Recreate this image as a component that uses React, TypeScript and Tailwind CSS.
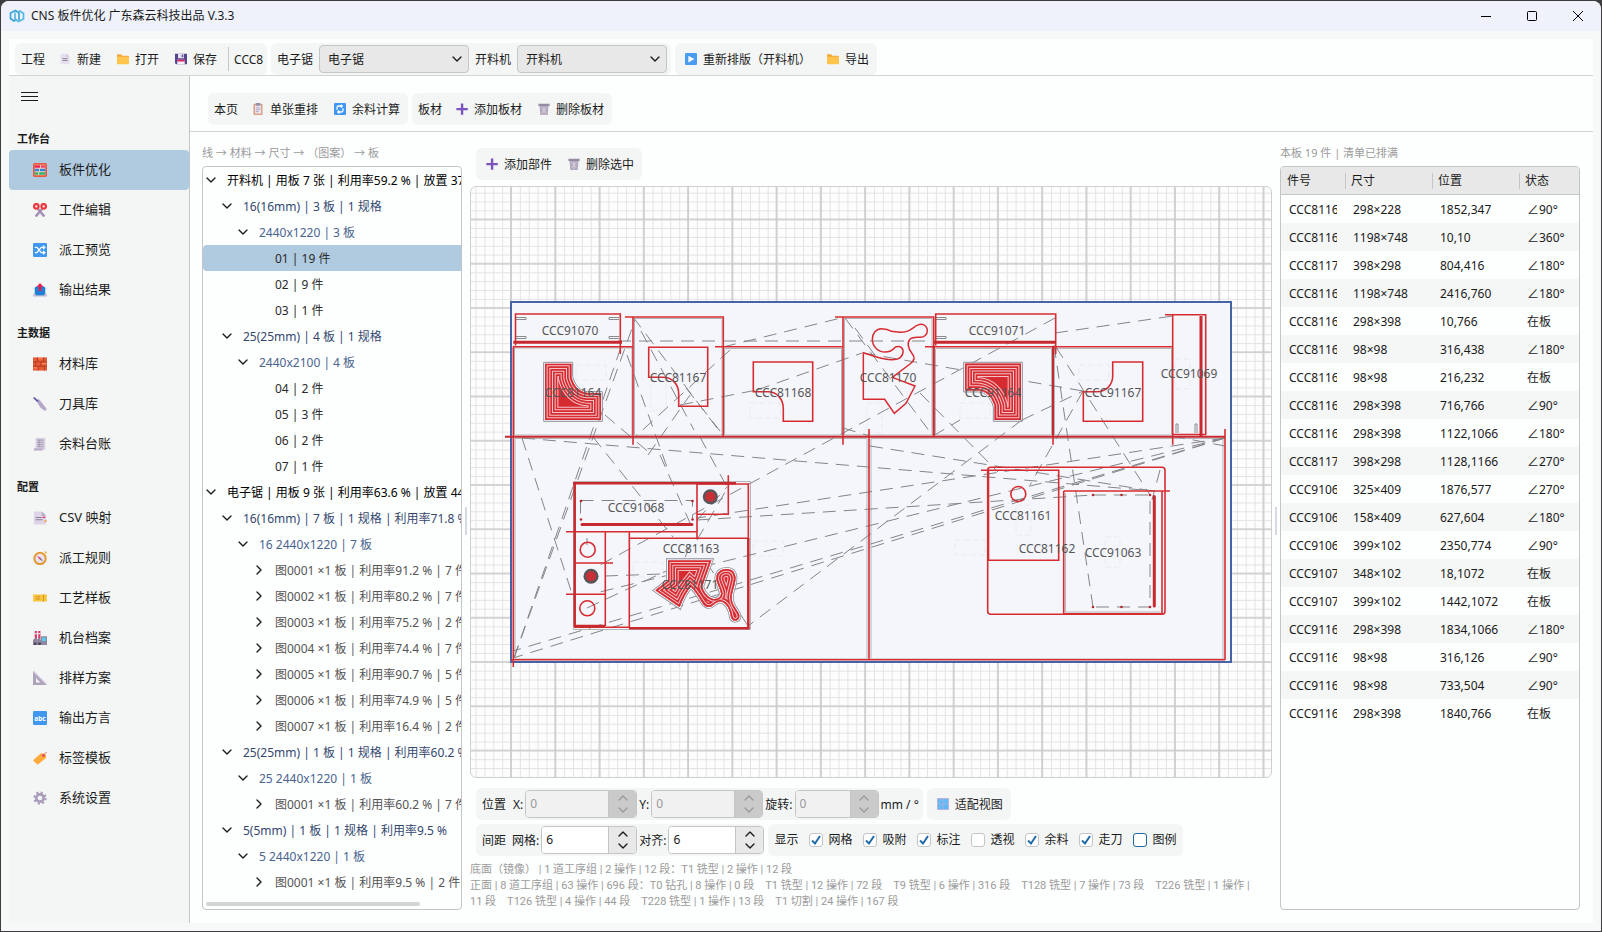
import { useState } from "react";
import type { ReactNode } from "react";
import { ChevronDown, ChevronRight, ChevronUp } from "lucide-react";

type IconName =
  | "doc" | "folder" | "save" | "play" | "clipboard" | "refresh" | "plus" | "trash" | "window"
  | "abacus" | "scissors" | "shuffle" | "outbox" | "brick" | "knife" | "scroll" | "pages"
  | "compass" | "ticket" | "factory" | "ruler" | "abc" | "tag" | "gear";

const icons: Record<IconName, ReactNode> = {
  doc: (
    <>
      <path d="M2 1h8l4 4v10H2z" fill="#e6dfee" />
      <path d="M10 1l4 4h-4z" fill="#c9bdd8" />
      <path d="M4.500 7.500h7M4.500 10h7" stroke="#8d8299" strokeWidth="1.300" />
    </>
  ),
  folder: (
    <>
      <path d="M0 2.500q0-1 1-1h4.500l1.500 2h8q1 0 1 1V14H0z" fill="#f3a73c" />
      <path d="M0 5h16v9q0 1-1 1H1q-1 0-1-1z" fill="#ffc64b" />
    </>
  ),
  save: (
    <>
      <path d="M0 1h16v14H1.500L0 13.500z" fill="#56468f" />
      <path d="M4 1h8v6H4z" fill="#e9e4f3" />
      <path d="M9 2h2v3.500H9z" fill="#56468f" />
      <path d="M3 9h10v6H3z" fill="#f3eef9" />
      <path d="M3 9h10v2.300H3z" fill="#d9245c" />
    </>
  ),
  play: (
    <>
      <rect width="16" height="16" rx="1.500" fill="#4a9cf2" />
      <path d="M4.500 3.500l8 4.500-8 4.500z" fill="#fff" />
    </>
  ),
  clipboard: (
    <>
      <rect x="2" y="1" width="12" height="15" rx="1" fill="#d9a184" />
      <path d="M4 3h8v11H4z" fill="#eee7f3" />
      <path d="M5 0h6v3.500H5z" fill="#9a8fa8" />
      <path d="M5 6.500h6M5 9h6M5 11.500h4" stroke="#a99bbb" strokeWidth="1.200" />
    </>
  ),
  refresh: (
    <>
      <rect width="16" height="16" rx="1.500" fill="#3f97f0" />
      <path d="M4 9V6q0-2 2-2h5M9 2.500L11 4 9 6M12 7v3q0 2-2 2H5M7 10l-2 2 2 2" fill="none" stroke="#fff" strokeWidth="1.700" />
    </>
  ),
  plus: <path d="M6.500.5h3.200v6h6v3.200h-6v6H6.500v-6h-6V6.500h6z" fill="#7a54bd" />,
  trash: (
    <>
      <path d="M2 4h12l-1 12H3z" fill="#b5abc0" />
      <path d="M.5 1h15v3H.5z" fill="#978ba3" />
      <path d="M5 6l6 7M11 6l-6 7M8 5v10" stroke="#dcd6e2" strokeWidth="1" />
    </>
  ),
  window: (
    <>
      <rect width="16" height="16" rx="1" fill="#b7b3dc" />
      <path d="M1.500 1.500h6v6h-6zM8.500 1.500h6v6h-6zM1.500 8.500h6v6h-6zM8.500 8.500h6v6h-6z" fill="#5db6f4" />
      <path d="M3 6l3-3M10 6l3-3M3 13l3-3" stroke="#8dd2fb" strokeWidth="1.200" />
    </>
  ),
  abacus: (
    <>
      <rect width="16" height="16" rx="2" fill="#e9583c" />
      <path d="M2 2h12v12H2z" fill="#ffd2bf" />
      <path d="M2 4h6" stroke="#e52a56" strokeWidth="3" />
      <path d="M9 4h5" stroke="#f3476b" strokeWidth="3" />
      <path d="M2 8h5M8 8h6" stroke="#2c87e0" strokeWidth="3" />
      <path d="M2 12h4M7 12h7" stroke="#31b56b" strokeWidth="3" />
    </>
  ),
  scissors: (
    <>
      <path d="M5 6l8 9.500M11 6L3 15.500" stroke="#a48fb4" strokeWidth="2.800" />
      <circle cx="3.800" cy="3.800" r="2.600" fill="none" stroke="#f0383f" strokeWidth="2.500" />
      <circle cx="12.200" cy="3.800" r="2.600" fill="none" stroke="#f0383f" strokeWidth="2.500" />
    </>
  ),
  shuffle: (
    <>
      <rect width="16" height="16" rx="1.500" fill="#3f97f0" />
      <path d="M2 5h2.500l5 6H13M2 11h2.500l5-6H13M11.500 3L13.500 5l-2 2M11.500 9l2 2-2 2" fill="none" stroke="#fff" strokeWidth="1.600" />
    </>
  ),
  outbox: (
    <>
      <path d="M1 12h14l1 3.500H0z" fill="#c1b6d0" />
      <path d="M2 6q0-2 2-2h8q2 0 2 2v6l-2 2H4l-2-2z" fill="#1f7fd6" />
      <path d="M8 0l4 4.500H9.500V9h-3V4.500H4z" fill="#e0244f" />
    </>
  ),
  brick: (
    <>
      <rect y=".5" width="16" height="15" fill="#e85a35" />
      <path d="M0 5.500h16M0 10.500h16M5 .5v5M12 .5v5M9 5.500v5M3 5.500v5M6 10.500v5M13 10.500v5" stroke="#a83a26" strokeWidth="1" />
      <path d="M6 2h5M10 7.500h5M1 12.500h4" stroke="#ff8a5c" strokeWidth="1.300" />
    </>
  ),
  knife: (
    <>
      <path d="M4 3l3-.5 9 11.500-2 2q-6-3-8-8z" fill="#b3a6c7" />
      <path d="M0 1l1.500-1L6.500 4.500 5 6z" fill="#5d5ba6" />
      <path d="M14 16l2-2-1-2z" fill="#ddd4e6" />
    </>
  ),
  scroll: (
    <>
      <path d="M3 1h11v13.500H3z" fill="#d6cfe0" />
      <path d="M1 13h10v2.500H1z" fill="#b9abc9" />
      <path d="M5 3.500h7M5 6h7M5 8.500h7M5 11h7M7 3v8.500" stroke="#a095b0" strokeWidth="1" />
    </>
  ),
  pages: (
    <>
      <path d="M1 .5h9l5 5V15.500H1z" fill="#ded6e7" />
      <path d="M10 .5l5 5h-5z" fill="#b5a9c4" />
      <path d="M3 7.500h7M3 10h8" stroke="#8d8299" strokeWidth="1.200" />
      <path d="M11 6.500h3v1.500h-3z" fill="#e8315f" />
      <path d="M13 10.500h2.500v2H13z" fill="#f0a23a" />
    </>
  ),
  compass: (
    <>
      <circle cx="8" cy="8.500" r="6.500" fill="#e9e2ee" stroke="#e39a35" strokeWidth="2.300" />
      <path d="M13 0l3 1-1.500 3z" fill="#f0b24c" />
      <path d="M4.500 5.500L9 8l-1.500 1.500z" fill="#df3158" />
      <path d="M11.500 12L9 8 7.500 9.500z" fill="#6b6680" />
    </>
  ),
  ticket: (
    <>
      <path d="M0 4h16v2.800q-1.200 1.200 0 2.400V12H0V9.200q1.200-1.200 0-2.400z" fill="#f8c53f" />
      <path d="M3 6.500h5M3 9h5M12 4v8" stroke="#cf8d22" strokeWidth="1" />
    </>
  ),
  factory: (
    <>
      <path d="M2 0h2.500v10H2zM6 0h2.500v10H6z" fill="#d83c66" />
      <path d="M2 3h2.500M6 3h2.500" stroke="#f3dfe7" strokeWidth="1.300" />
      <path d="M0 10l4-2.500V10l4-2.500V10h1V6h7v10H0z" fill="#8f87a0" />
      <path d="M10.500 7.500h4v4h-4z" fill="#52d3f0" />
      <path d="M1 13h3v3H1zM6 13h3v3H6z" fill="#4c4558" />
    </>
  ),
  ruler: (
    <>
      <path d="M0 0l16 16H0z" fill="#aca3ba" />
      <path d="M3.500 8l5 5h-5z" fill="#f4f6f6" />
      <path d="M0 0l16 16" stroke="#cfc4dc" strokeWidth="1.500" />
    </>
  ),
  abc: (
    <>
      <rect width="16" height="16" rx="1.500" fill="#3f97f0" />
      <text x="8" y="11" textAnchor="middle" fontSize="7.500" fontWeight="700" fill="#fff">abc</text>
    </>
  ),
  tag: (
    <>
      <path d="M9 2.500l5.500.5.500 5-9 7q-1 .7-2-.3l-3-3q-1-1 0-2z" fill="#fbab3a" />
      <circle cx="12" cy="5" r="1.500" fill="#d9306b" />
      <path d="M12 5q3-6 4-2" fill="none" stroke="#e88a92" strokeWidth="1" />
    </>
  ),
  gear: (
    <>
      <circle cx="8" cy="8" r="6.300" fill="none" stroke="#a99cba" strokeWidth="2.600" strokeDasharray="2.400 2.540" />
      <circle cx="8" cy="8" r="4.200" fill="none" stroke="#a99cba" strokeWidth="3" />
    </>
  ),
};

function Icon({ name, className = "w-3 h-3" }: { name: IconName; className?: string }) {
  return (
    <svg viewBox="0 0 16 16" className={`shrink-0 ${className}`} aria-hidden="true">
      {icons[name]}
    </svg>
  );
}

function Group({ children, className = "" }: { children: ReactNode; className?: string }) {
  return <div className={`flex items-center h-8 shrink-0 rounded-md bg-[#f4f6f6] ${className}`}>{children}</div>;
}

function GroupLabel({ children }: { children: ReactNode }) {
  return <span className="px-[6px] pt-[2px]">{children}</span>;
}

function ToolButton({ icon, label }: { icon: IconName; label: string }) {
  return (
    <button className="flex items-center gap-[6px] h-8 px-2 rounded-md hover:bg-gray-200">
      <Icon name={icon} />
      <span className="pt-[2px]">{label}</span>
    </button>
  );
}

function MachineSelect({ label }: { label: string }) {
  return (
    <label className="flex items-center">
      <GroupLabel>{label}</GroupLabel>
      <span className="relative flex items-center">
        <select className="appearance-none w-[150px] h-7 pl-2 pt-px rounded border border-[#c3c5c7] bg-[#e8e8e8]">
          <option>{label}</option>
        </select>
        <ChevronDown size={16} strokeWidth={2} className="absolute right-1 pointer-events-none" />
      </span>
    </label>
  );
}

interface SpinProps {
  label: string;
  initial: number;
  width: string;
  disabled?: boolean;
}

function Spin({ label, initial, width, disabled = false }: SpinProps) {
  const [value, setValue] = useState(initial);
  const tone = disabled
    ? "bg-[#cacaca] text-[#9a9a9a]"
    : "bg-[#e8e8e8] text-[#1b1b1b]";

  return (
    <div className="flex items-center gap-[2px]">
      <label htmlFor={`spin-${label}`} className="pt-[2px]">{label}:</label>
      <div className={`flex h-7 rounded border border-[#c3c5c7] overflow-hidden ${width}`}>
        <input
          id={`spin-${label}`}
          value={value}
          disabled={disabled}
          onChange={(e) => setValue(Number(e.target.value) || 0)}
          className="flex-1 min-w-0 pl-1 bg-white disabled:bg-[#f1f1f1] disabled:text-[#9a9a9a] outline-none"
        />
        <div className={`flex flex-col w-7 items-center justify-center border-l border-[#c3c5c7] ${tone}`}>
          <button disabled={disabled} aria-label={`${label} +`} onClick={() => setValue(value + 1)} className="h-3 flex items-center">
            <ChevronUp size={16} strokeWidth={2} />
          </button>
          <button disabled={disabled} aria-label={`${label} -`} onClick={() => setValue(value - 1)} className="h-3 flex items-center">
            <ChevronDown size={16} strokeWidth={2} />
          </button>
        </div>
      </div>
    </div>
  );
}

function Check({ label, on, focused = false }: { label: string; on: boolean; focused?: boolean }) {
  return (
    <label className="flex items-center gap-[6px] pl-[10px]">
      <span className="relative flex">
        <input
          type="checkbox"
          defaultChecked={on}
          className={`peer appearance-none w-[14px] h-[14px] rounded-[3px] border bg-white ${focused ? "border-[#1f6aa8]" : "border-[#c3c5c7]"}`}
        />
        <svg viewBox="0 0 14 14" className="absolute inset-0 w-[14px] h-[14px] pointer-events-none opacity-0 peer-checked:opacity-100">
          <path d="M3 7.500L6 10.500 11 3" fill="none" stroke="#1f6aa8" strokeWidth="2" />
        </svg>
      </span>
      {label}
    </label>
  );
}

const navSections: { title: string; items: { icon: IconName; label: string; active?: boolean }[] }[] = [
  {
    title: "工作台",
    items: [
      { icon: "abacus", label: "板件优化", active: true },
      { icon: "scissors", label: "工件编辑" },
      { icon: "shuffle", label: "派工预览" },
      { icon: "outbox", label: "输出结果" },
    ],
  },
  {
    title: "主数据",
    items: [
      { icon: "brick", label: "材料库" },
      { icon: "knife", label: "刀具库" },
      { icon: "scroll", label: "余料台账" },
    ],
  },
  {
    title: "配置",
    items: [
      { icon: "pages", label: "CSV 映射" },
      { icon: "compass", label: "派工规则" },
      { icon: "ticket", label: "工艺样板" },
      { icon: "factory", label: "机台档案" },
      { icon: "ruler", label: "排样方案" },
      { icon: "abc", label: "输出方言" },
      { icon: "tag", label: "标签模板" },
      { icon: "gear", label: "系统设置" },
    ],
  },
];

function Sidebar() {
  return (
    <nav className="w-[181px] shrink-0 bg-[#f4f6f6] border-r border-[#c3c5c7] overflow-hidden">
      <button aria-label="菜单" className="flex items-center h-10 px-3">
        <svg viewBox="0 0 17 10" className="w-[17px] h-[10px]" stroke="#1b1b1b" strokeWidth="1">
          <path d="M0 1.500h17M0 5.500h17M0 9.500h17" />
        </svg>
      </button>
      {navSections.map((section) => (
        <div key={section.title}>
          <h2 className="h-[34px] pt-[15px] pl-2 text-[11px] leading-4 font-bold">{section.title}</h2>
          {section.items.map((item) => (
            <button
              key={item.label}
              className={`flex items-center gap-3 w-full h-10 pl-6 rounded text-[13px] ${item.active ? "bg-[#b0cadf]" : "hover:bg-gray-200"}`}
            >
              <Icon name={item.icon} className="w-[14px] h-[14px]" />
              <span>{item.label}</span>
            </button>
          ))}
        </div>
      ))}
    </nav>
  );
}

interface TreeRow {
  level: 0 | 1 | 2 | 3;
  text: string;
  mark?: "open" | "closed";
  selected?: boolean;
}

const treeRows: TreeRow[] = [
  { level: 0, text: "开料机 | 用板 7 张 | 利用率59.2 % | 放置 37", mark: "open" },
  { level: 1, text: "16(16mm) | 3 板 | 1 规格", mark: "open" },
  { level: 2, text: "2440x1220 | 3 板", mark: "open" },
  { level: 3, text: "01 | 19 件", selected: true },
  { level: 3, text: "02 | 9 件" },
  { level: 3, text: "03 | 1 件" },
  { level: 1, text: "25(25mm) | 4 板 | 1 规格", mark: "open" },
  { level: 2, text: "2440x2100 | 4 板", mark: "open" },
  { level: 3, text: "04 | 2 件" },
  { level: 3, text: "05 | 3 件" },
  { level: 3, text: "06 | 2 件" },
  { level: 3, text: "07 | 1 件" },
  { level: 0, text: "电子锯 | 用板 9 张 | 利用率63.6 % | 放置 44", mark: "open" },
  { level: 1, text: "16(16mm) | 7 板 | 1 规格 | 利用率71.8 %", mark: "open" },
  { level: 2, text: "16 2440x1220 | 7 板", mark: "open" },
  { level: 3, text: "图0001 ×1 板 | 利用率91.2 % | 7 件", mark: "closed" },
  { level: 3, text: "图0002 ×1 板 | 利用率80.2 % | 7 件", mark: "closed" },
  { level: 3, text: "图0003 ×1 板 | 利用率75.2 % | 2 件", mark: "closed" },
  { level: 3, text: "图0004 ×1 板 | 利用率74.4 % | 7 件", mark: "closed" },
  { level: 3, text: "图0005 ×1 板 | 利用率90.7 % | 5 件", mark: "closed" },
  { level: 3, text: "图0006 ×1 板 | 利用率74.9 % | 5 件", mark: "closed" },
  { level: 3, text: "图0007 ×1 板 | 利用率16.4 % | 2 件", mark: "closed" },
  { level: 1, text: "25(25mm) | 1 板 | 1 规格 | 利用率60.2 %", mark: "open" },
  { level: 2, text: "25 2440x1220 | 1 板", mark: "open" },
  { level: 3, text: "图0001 ×1 板 | 利用率60.2 % | 7 件", mark: "closed" },
  { level: 1, text: "5(5mm) | 1 板 | 1 规格 | 利用率9.5 %", mark: "open" },
  { level: 2, text: "5 2440x1220 | 1 板", mark: "open" },
  { level: 3, text: "图0001 ×1 板 | 利用率9.5 % | 2 件", mark: "closed" },
];

const treeIndent = ["pl-0", "pl-4", "pl-8", "pl-12"];
const treeColor = ["text-black", "text-[#34486f]", "text-[#4a648f]", "text-[#2b2b2b]"];

function BoardTree() {
  return (
    <section className="flex flex-col w-[260px] shrink-0">
      <p className="h-[34px] pt-[13px] text-[11px] leading-4 text-[#9b9b9b]">线 → 材料 → 尺寸 → （图案） → 板</p>
      <div className="flex flex-col flex-1 min-h-0 rounded border border-[#c3c5c7] overflow-hidden">
        <ul className="flex-1 min-h-0 overflow-hidden">
          {treeRows.map((row, i) => (
            <li
              key={i}
              className={`flex items-center gap-2 h-[26px] whitespace-nowrap ${treeIndent[row.level]} ${
                row.level === 3 && row.mark ? "text-[#555555]" : treeColor[row.level]
              } ${row.selected ? "bg-[#b0cadf] rounded-l" : ""}`}
            >
              <span className="w-4 shrink-0 text-[#1b1b1b]">
                {row.mark === "open" && <ChevronDown size={16} strokeWidth={2} />}
                {row.mark === "closed" && <ChevronRight size={16} strokeWidth={2} />}
              </span>
              <span className="pt-[2px]">{row.text}</span>
            </li>
          ))}
        </ul>
        <div className="w-[214px] h-1 mb-[3px] ml-[3px] rounded-full bg-[#d3d5d5]" />
      </div>
    </section>
  );
}

// Concentric pocket passes: shrinking strokes clipped to the outline.
function Pocket({ id, d, passes }: { id: string; d: string; passes: number }) {
  const steps = Array.from({ length: passes }, (_, i) => passes - 1 - i);
  return (
    <g>
      <clipPath id={id}>
        <path d={d} />
      </clipPath>
      <g clipPath={`url(#${id})`} fill="none">
        <path d={d} fill="#d62c31" />
        {steps.map((k) => (
          <g key={k}>
            <path d={d} stroke="#f3c3c8" strokeWidth={2 * (8 * k + 8)} />
            <path d={d} stroke="#d62c31" strokeWidth={2 * (8 * k + 5)} />
          </g>
        ))}
      </g>
    </g>
  );
}

const partLabels: [string, number, number][] = [
  ["CCC91070", 570, 335], ["CCC81164", 573, 397], ["CCC81167", 678, 382], ["CCC81168", 783, 397],
  ["CCC81170", 888, 382], ["CCC91071", 997, 335], ["CCC91164", 993, 397], ["CCC91167", 1113, 397],
  ["CCC91069", 1189, 378], ["CCC91068", 636, 512], ["CCC81163", 691, 553], ["CCC81171", 690, 589],
  ["CCC81161", 1023, 520], ["CCC81162", 1047, 553], ["CCC91063", 1113, 557],
];

// Rapid moves between cuts: x1, y1, x2, y2
const travelMoves = [
  [618, 341, 935, 341], [633, 317, 723, 436], [641, 331, 694, 430], [627, 355, 668, 470],
  [514, 658, 620, 350], [514, 658, 635, 320], [522, 438, 574, 600], [522, 438, 1155, 491],
  [723, 347, 845, 317], [1055, 333, 1173, 316], [680, 405, 757, 390], [757, 390, 862, 353],
  [863, 353, 1083, 391], [845, 318, 933, 436], [855, 328, 880, 362], [1055, 318, 600, 565],
  [1022, 420, 748, 626], [1022, 420, 1083, 391], [920, 393, 998, 472], [1054, 345, 1093, 607],
  [1056, 347, 1150, 495], [1083, 391, 1030, 485], [1225, 438, 513, 658], [1225, 438, 513, 651],
  [1225, 438, 697, 518], [697, 520, 1093, 495], [1225, 438, 600, 592], [870, 446, 1153, 491],
  [1172, 436, 1225, 446], [700, 437, 727, 487], [593, 437, 673, 537], [660, 455, 690, 523],
  [697, 520, 727, 487], [697, 540, 728, 487], [605, 415, 652, 455], [648, 455, 690, 395],
  [730, 350, 635, 437], [587, 538, 587, 545], [686, 388, 724, 436], [1160, 470, 1152, 500],
  [748, 626, 705, 560], [690, 545, 684, 560], [605, 576, 690, 573],
  [843, 428, 870, 436], [933, 436, 960, 420], [587, 608, 690, 560],
];

const ghostBoxes = [
  [576, 365, 30, 15], [651, 381, 15, 30], [750, 403, 30, 15], [867, 403, 15, 30], [960, 403, 30, 15],
  [1079, 365, 30, 15], [1175, 359, 15, 30], [633, 562, 30, 15], [753, 541, 30, 15], [955, 540, 30, 15],
  [1105, 537, 15, 30], [1016, 505, 15, 30],
];

const lShape = "M135 221H214V262C222 292 240 307 262 309H303V390H135Z";
const blob =
  "M504 391H634L606 470C616 500 640 515 657 503C674 492 650 465 649 445C650 425 664 417 680 417C698 417 708 430 706 450C702 480 686 500 702 528C712 545 719 550 718 560C716 574 697 577 693 561C690 540 682 518 660 514C645 516 640 531 625 531C606 530 600 495 572 470C560 485 548 505 539 531L466 481L504 452Z";

function NestingCanvas() {
  return (
    <div className="flex-1 min-h-0 rounded-md border border-[#cfd1d1] overflow-hidden bg-[#fdfdfd]">
      <svg width="100%" height="100%" role="img" aria-label="排版图">
        <defs>
          <pattern id="minor" width="8.852" height="8.852" x="511" y="661.800" patternUnits="userSpaceOnUse">
            <path d="M.5 0V8.852M0 .5H8.852" stroke="#e2e3e3" strokeWidth="1" />
          </pattern>
          <pattern id="major" width="44.260" height="44.260" x="510" y="661" patternUnits="userSpaceOnUse">
            <path d="M1 0V44.260M0 1H44.260" stroke="#c9caca" strokeWidth="1.600" />
          </pattern>
        </defs>
        <g transform="translate(-471 -187)">
          <rect x="471" y="187" width="3000" height="3000" fill="url(#minor)" />
          <rect x="471" y="187" width="3000" height="3000" fill="url(#major)" />
          <rect x="511" y="302" width="720" height="360" fill="#f5f6fb" stroke="#4563a5" strokeWidth="2" />

          <g fill="none" stroke="#e9eaee" strokeDasharray="6 3">
            {ghostBoxes.map(([x, y, w, h]) => (
              <rect key={`${x}-${y}`} x={x} y={y} width={w} height={h} />
            ))}
          </g>

          <g fill="none" stroke="#b4b4b9">
            <path d="M514.500 348H632V435H514.500zM634.500 318.500H722V435H634.500zM724.500 348.500H841.500V435H724.500zM844.500 318.500H932V435H844.500zM935.500 348.500H1051.500V435H935.500zM1054.500 348.500H1171.500V435H1054.500z" />
            <path d="M573.500 481.500h177v148h-177zM515 438.500H867V659H515zM871 438.500H1223V659H871z" />
            <path d="M516 317.500h10v2h-10M516 336.500h10v2h-10M619 317.500h-10v2h10M619 336.500h-10v2h10M936 317.500h10v2h-10M936 336.500h10v2h-10M1176 433v-9h2v9M1195 433v-9h2v9" stroke="#8a8a8f" />
            <path d="M1065.500 493V612H1160.500" />
          </g>

          <g stroke="#858588" strokeDasharray="13 8" fill="none">
            {travelMoves.map(([x1, y1, x2, y2], i) => (
              <path key={i} d={`M${x1} ${y1}L${x2} ${y2}`} />
            ))}
            <path d="M580.500 500.500H692.500V520M580.500 500.500V520" />
            <path d="M1093 495H1150V607H1093" />
          </g>

          {/* pockets */}
          <g transform="translate(500 290) scale(.33333)">
            <path d="M131 217H218V260C226 288 242 303 262 305H307V394H131Z" fill="none" stroke="#8f8f98" strokeWidth="3" />
            <Pocket id="pocket-a" d={lShape} passes={5} />
          </g>
          <g transform="rotate(180 783 391.800) translate(500 290) scale(.33333)">
            <path d="M131 217H218V260C226 288 242 303 262 305H307V394H131Z" fill="none" stroke="#8f8f98" strokeWidth="3" />
            <Pocket id="pocket-b" d={lShape} passes={5} />
          </g>
          <g transform="translate(500 430) scale(.33333)">
            <path d={blob} fill="none" stroke="#8f8f98" strokeWidth="12" />
            <path d={blob} fill="none" stroke="#f5f6fb" strokeWidth="7" />
            <Pocket id="pocket-c" d={blob} passes={4} />
          </g>

          {/* cut lines */}
          <g fill="none" stroke="#d62c31" strokeWidth="1.600">
            <path d="M515.500 345.500V314H620.300V354M513 346.700H633M513.300 346.700V667" />
            <path d="M625 317H723.300V436.500M633 317V444.700M715 346.700H843" />
            <path d="M835 317H933.700V436.500M843 317V444.700M925 346.700H1173" />
            <path d="M935.700 345.500V314H1055.700V354M1053 346.700V444.700" />
            <path d="M1165 314.700H1205.700V434.500H1172.700M1172.700 314.700V444.700" />
            <path d="M869 429V660M1225 429V660M511 659.700H1225" />
            <path d="M697 484V538.700M697 484H748.300V540M697 514.300H728.300V475.300M566 531.700H697M629.300 531V628" />
            <path d="M605.300 531V626M574 563H613M566 594.300H605.300M574 627.300H630M629.300 538.300H748.500" />
            <rect x="987.700" y="467.300" width="177.300" height="147" rx="3" />
            <path d="M981 470.300H1058.700V560.300H988.500V470.300M1063.700 491V613.700H1162V491M1063.700 491H1170" />
            <circle cx="587.700" cy="549.700" r="7.500" />
            <circle cx="587.300" cy="608.300" r="7.500" />
            <circle cx="1018.300" cy="494" r="7.500" />
            <path d="M648.700 347.300H707.700V406.300H678.700V394C678.700 384 672 377.300 663 377.300H648.700Z" />
            <path d="M753.300 362H812.700V421.300H783.300V409C783.300 399 777 391.700 768 391.700H753.300Z" />
            <path d="M1112.700 362H1142.700V421.300H1083.300V391.700H1097C1106 391.700 1112.700 385 1112.700 376Z" />
          </g>
          <g fill="none" stroke="#c8292f">
            <path d="M505 436.700H1225M933.700 346V436M1053 346V436" strokeWidth="2" />
            <path d="M513.300 342.300H622M934 342.300H1056M1201 316V436" strokeWidth="3" />
            <path d="M573 483.300H736M629 628.300H749.500" strokeWidth="2.500" />
            <path d="M574.700 483V626.500M748.300 538V629M574 626H605" strokeWidth="2.500" />
            <path d="M582 524.500H692M1154.300 496.500V606" strokeWidth="3" strokeLinecap="round" />
          </g>
          <path
            d="M130 188V328H194L223 370L258 340L285 288L217 262L270 222C285 210 285 202 277 192C262 175 262 155 270 148C277 140 290 142 302 142C312 142 322 134 322 122C322 110 313 103 303 103C290 103 280 115 268 121C250 130 235 127 215 124C205 118 195 116 185 116C168 116 157 130 157 148C157 170 175 186 195 186C212 186 220 178 224 173C230 168 240 168 245 173C254 183 248 202 232 207C210 213 190 208 130 188Z"
            transform="translate(820 290) scale(.33333)"
            fill="none"
            stroke="#d62c31"
            strokeWidth="4.500"
          />

          {/* drill holes */}
          {[[591, 576.3], [710.3, 496.7]].map(([cx, cy]) => (
            <g key={cx}>
              <circle cx={cx} cy={cy} r="7.500" fill="#55555a" />
              <circle cx={cx} cy={cy} r="5" fill="#d62c31" />
              <circle cx={cx} cy={cy} r="3" fill="none" stroke="#7d4a50" strokeWidth=".6" />
            </g>
          ))}
          <g fill="#b5282d">
            {[[581, 501], [692.5, 501], [581, 519.5], [692.5, 519.5], [1093, 495], [1121.5, 495], [1150, 495], [1093, 607], [1121.5, 607], [1150, 607]].map(([cx, cy]) => (
              <circle key={`${cx}-${cy}`} cx={cx} cy={cy} r="1.300" />
            ))}
          </g>

          <g fill="#555557" fontSize="12" textAnchor="middle">
            {partLabels.map(([name, x, y]) => (
              <text key={name} x={x} y={y}>{name}</text>
            ))}
          </g>
        </g>
      </svg>
    </div>
  );
}

function Splitter() {
  return (
    <div className="flex items-center justify-center w-2 shrink-0">
      <div className="w-[2px] h-7 bg-[#d5d9e1]" />
    </div>
  );
}

const parts = [
  ["CCC8116", "298×228", "1852,347", "∠90°"],
  ["CCC8116", "1198×748", "10,10", "∠360°"],
  ["CCC8117", "398×298", "804,416", "∠180°"],
  ["CCC8116", "1198×748", "2416,760", "∠180°"],
  ["CCC8116", "298×398", "10,766", "在板"],
  ["CCC8116", "98×98", "316,438", "∠180°"],
  ["CCC8116", "98×98", "216,232", "在板"],
  ["CCC8116", "298×398", "716,766", "∠90°"],
  ["CCC8116", "298×398", "1122,1066", "∠180°"],
  ["CCC8117", "398×298", "1128,1166", "∠270°"],
  ["CCC9106", "325×409", "1876,577", "∠270°"],
  ["CCC9106", "158×409", "627,604", "∠180°"],
  ["CCC9106", "399×102", "2350,774", "∠90°"],
  ["CCC9107", "348×102", "18,1072", "在板"],
  ["CCC9107", "399×102", "1442,1072", "在板"],
  ["CCC9116", "298×398", "1834,1066", "∠180°"],
  ["CCC9116", "98×98", "316,126", "∠90°"],
  ["CCC9116", "98×98", "733,504", "∠90°"],
  ["CCC9116", "298×398", "1840,766", "在板"],
];

function PartList() {
  return (
    <section className="flex flex-col w-[300px] shrink-0">
      <p className="h-[34px] pt-[13px] text-[11px] leading-4 text-[#9b9b9b]">本板 19 件 | 清单已排满</p>
      <div className="flex-1 min-h-0 rounded border border-[#c3c5c7] overflow-hidden">
        <table className="w-full table-fixed border-separate border-spacing-0 text-left">
          <colgroup>
            <col className="w-16" />
            <col className="w-[87px]" />
            <col className="w-[87px]" />
            <col />
          </colgroup>
          <thead>
            <tr className="h-7 bg-[#e8e8e8]">
              {["件号", "尺寸", "位置", "状态"].map((name, i) => (
                <th key={name} className="p-0 font-normal border-b border-[#c3c5c7]">
                  <span className={`block leading-4 border-l pl-[5px] ${i === 0 ? "border-transparent" : "border-[#c3c5c7]"}`}>
                    {name}
                  </span>
                </th>
              ))}
            </tr>
          </thead>
          <tbody>
            {parts.map((row, i) => (
              <tr key={i} className="h-7 even:bg-[#f5f6f6]">
                {row.map((cell, j) => (
                  <td key={j} className="px-2 py-0">
                    <div className="pt-[2px] overflow-hidden whitespace-nowrap">{cell}</div>
                  </td>
                ))}
              </tr>
            ))}
          </tbody>
        </table>
      </div>
    </section>
  );
}

function TitleBar() {
  return (
    <header className="flex items-center h-[30px] shrink-0 bg-[#eff2fb]">
      <svg viewBox="0 0 16 14" className="w-4 h-[14px] ml-2 mr-[6px]" fill="none" stroke="#3ba3d8" strokeWidth="1.700">
        <path d="M10 11V4L6.500 1.500 1.500 4v5.500L5 12l2.500-1.500" />
        <path d="M6 3.500V10l3.500 2.500 5-2.500V4.500L11 2 8.500 3.500" stroke="#58b6e6" />
      </svg>
      <h1 className="flex-1">CNS 板件优化 广东森云科技出品 V.3.3</h1>
      <button aria-label="最小化" className="flex items-center justify-center w-[46px] h-full">
        <svg viewBox="0 0 10 10" className="w-[10px] h-[10px]" stroke="#000"><path d="M0 5.500h10" /></svg>
      </button>
      <button aria-label="最大化" className="flex items-center justify-center w-[46px] h-full">
        <svg viewBox="0 0 10 10" className="w-[10px] h-[10px]" fill="none" stroke="#000"><rect x=".5" y=".5" width="9" height="9" rx="1" /></svg>
      </button>
      <button aria-label="关闭" className="flex items-center justify-center w-[46px] h-full">
        <svg viewBox="0 0 10 10" className="w-[10px] h-[10px]" stroke="#000"><path d="M0 0l10 10M10 0L0 10" /></svg>
      </button>
    </header>
  );
}

export default function App() {
  return (
    <div className="h-screen p-px bg-[#3d3d40] font-['Noto_Sans','Noto_Sans_CJK_SC',sans-serif] text-xs text-[#1b1b1b]">
      <div className="flex flex-col h-full rounded-t-lg overflow-hidden bg-[#f7f9f9]">
        <TitleBar />
        <div className="flex flex-col flex-1 min-h-0 m-2 bg-[#fdfefe]">
          <div className="flex items-center gap-1 h-[37px] shrink-0 pl-[6px] pt-1 border-b border-[#d2d4d5]">
            <Group>
              <GroupLabel>工程</GroupLabel>
              <ToolButton icon="doc" label="新建" />
              <ToolButton icon="folder" label="打开" />
              <ToolButton icon="save" label="保存" />
              <span className="w-px h-6 ml-[3px] mr-[5px] bg-[#c3c5c7]" />
              <span className="w-[33px] pt-[2px]">CCC8</span>
            </Group>
            <Group className="pr-1">
              <MachineSelect label="电子锯" />
              <MachineSelect label="开料机" />
            </Group>
            <Group className="pl-[2px]">
              <ToolButton icon="play" label="重新排版（开料机）" />
              <ToolButton icon="folder" label="导出" />
            </Group>
          </div>

          <div className="flex flex-1 min-h-0">
            <Sidebar />
            <main className="flex flex-col flex-1 min-w-0">
              <div className="flex gap-1 h-14 shrink-0 pl-[18px] pt-[17px] border-b border-[#d2d4d5]">
                <Group>
                  <GroupLabel>本页</GroupLabel>
                  <ToolButton icon="clipboard" label="单张重排" />
                  <ToolButton icon="refresh" label="余料计算" />
                </Group>
                <Group>
                  <GroupLabel>板材</GroupLabel>
                  <ToolButton icon="plus" label="添加板材" />
                  <ToolButton icon="trash" label="删除板材" />
                </Group>
              </div>

              <div className="flex flex-1 min-h-0 pl-3 pr-[13px] pb-[13px]">
                <BoardTree />
                <Splitter />
                <section className="flex flex-col flex-1 min-w-0 pt-4">
                  <div className="flex pl-[6px] mb-[6px]">
                    <Group className="pl-[2px]">
                      <ToolButton icon="plus" label="添加部件" />
                      <ToolButton icon="trash" label="删除选中" />
                    </Group>
                  </div>
                  <NestingCanvas />
                  <div className="flex gap-1 mt-[10px] pl-[6px]">
                    <Group className="gap-[2px] pr-1">
                      <span className="pl-[6px] pr-[5px] pt-[2px]">位置</span>
                      <Spin label="X" initial={0} width="w-[112px]" disabled />
                      <Spin label="Y" initial={0} width="w-[112px]" disabled />
                      <Spin label="旋转" initial={0} width="w-[84px]" disabled />
                      <span className="pt-[2px]">mm / °</span>
                    </Group>
                    <Group className="pl-[2px]">
                      <ToolButton icon="window" label="适配视图" />
                    </Group>
                  </div>
                  <div className="flex gap-1 mt-1 pl-[6px]">
                    <Group className="gap-[2px]">
                      <span className="pl-[6px] pr-1 pt-[2px]">间距</span>
                      <Spin label="网格" initial={6} width="w-24" />
                      <Spin label="对齐" initial={6} width="w-24" />
                    </Group>
                    <Group className="pr-[6px]">
                      <span className="pl-[6px]">显示</span>
                      <Check label="网格" on />
                      <Check label="吸附" on />
                      <Check label="标注" on />
                      <Check label="透视" on={false} />
                      <Check label="余料" on />
                      <Check label="走刀" on />
                      <Check label="图例" on={false} focused />
                    </Group>
                  </div>
                  <div className="mt-[6px] font-['Roboto','Noto_Sans_CJK_SC',sans-serif] text-[11px] leading-4 text-[#9b9b9b]">
                    <p>底面（镜像） | 1 道工序组 | 2 操作 | 12 段：T1 铣型 | 2 操作 | 12 段</p>
                    <p>
                      正面 | 8 道工序组 | 63 操作 | 696 段：T0 钻孔 | 8 操作 | 0 段　T1 铣型 | 12 操作 | 72 段　T9 铣型 | 6 操作 | 316 段　T128 铣型 | 7 操作 | 73 段　T226 铣型 | 1 操作 |
                      <br />
                      11 段　T126 铣型 | 4 操作 | 44 段　T228 铣型 | 1 操作 | 13 段　T1 切割 | 24 操作 | 167 段
                    </p>
                  </div>
                </section>
                <Splitter />
                <PartList />
              </div>
            </main>
          </div>
        </div>
      </div>
    </div>
  );
}
